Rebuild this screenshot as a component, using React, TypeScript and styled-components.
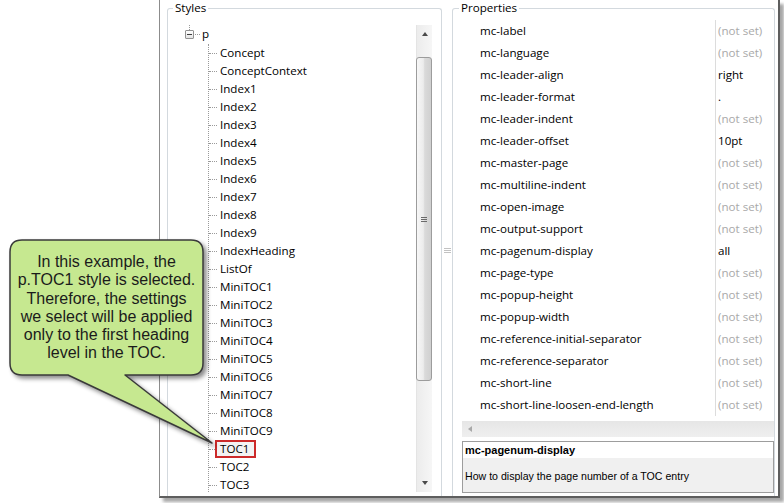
import React from 'react';
import styled, { createGlobalStyle } from 'styled-components';

const GlobalStyle = createGlobalStyle`
  html, body { margin: 0; padding: 0; background: #ffffff; }
  body { width: 784px; height: 503px; overflow: hidden; font-family: "Open Sans", "Noto Sans", sans-serif; }
  * { box-sizing: border-box; }
`;

const UI_FONT = `"Open Sans", "Noto Sans", sans-serif`;

const Stage = styled.div`
  position: relative;
  width: 784px;
  height: 503px;
  display: flex;
  padding-left: 159px;
  overflow: hidden;
`;

const Window = styled.div`
  width: 621px;
  height: 498px;
  border-left: 1px solid #8c8c8c;
  border-right: 2px solid #5e5e5e;
  border-bottom: 2px solid #5e5e5e;
  box-shadow: 4px 4px 3px rgba(0, 0, 0, 0.35);
  background: #ffffff;
  display: flex;
  padding: 0 3px 0 7px;
  overflow: hidden;
`;

const GroupBox = styled.fieldset<{ $width: number; $padLeft: number; $padRight: number }>`
  width: ${(p) => p.$width}px;
  height: 100%;
  margin: 0;
  min-width: 0;
  padding: 0 ${(p) => p.$padRight}px 0 ${(p) => p.$padLeft}px;
  border: 1px solid #d3d9de;
  border-bottom: none;
  border-radius: 3px 3px 0 0;
  display: flex;
  flex-direction: column;
`;

const Legend = styled.legend`
  padding: 0 2px;
  margin-left: -3px;
  font: 11.6px/16px ${UI_FONT};
  color: #000;
`;

const TreePanel = styled.div`
  margin-top: 9px;
  height: 467px;
  display: flex;
`;

const Tree = styled.div`
  flex: 1;
  overflow: hidden;
  font: 11.6px/14px ${UI_FONT};
  color: #000;
`;

const RootRow = styled.div`
  height: 19px;
  padding-left: 9px;
  padding-bottom: 1px;
  display: flex;
  align-items: center;
`;

const ExpandBox = styled.span`
  position: relative;
  width: 9px;
  height: 9px;
  border: 1px solid #929292;
  border-radius: 1px;
  background: linear-gradient(#ffffff, #e4e4e4);
  display: flex;
  align-items: center;
  justify-content: center;
  &::before {
    content: '';
    position: absolute;
    left: 3px;
    top: -7px;
    height: 6px;
    border-left: 1px dotted #9a9a9a;
  }
  &::after {
    content: '';
    width: 5px;
    height: 1px;
    background: #3d3d3d;
  }
`;

const RootConnector = styled.span`
  width: 5px;
  margin-left: 1px;
  border-top: 1px dotted #9a9a9a;
`;

const RootLabel = styled.span`
  margin-left: 2px;
`;

const ChildList = styled.div`
  margin-left: 32px;
  border-left: 1px dotted #9a9a9a;
`;

const ChildRow = styled.div`
  height: 18px;
  display: flex;
  align-items: center;
`;

const Connector = styled.span`
  width: 8px;
  border-top: 1px dotted #9a9a9a;
`;

const NodeLabel = styled.span<{ $selected?: boolean }>`
  margin-left: -2px;
  height: 18px;
  padding: 0 ${(p) => (p.$selected ? 5 : 3)}px 0 3px;
  border: 2px solid ${(p) => (p.$selected ? '#cc2a2a' : 'transparent')};
  background: ${(p) => (p.$selected ? '#f3f3f3' : 'transparent')};
  display: flex;
  align-items: center;
  white-space: nowrap;
`;

const VScroll = styled.div`
  width: 16px;
  display: flex;
  flex-direction: column;
  background: linear-gradient(to right, #ececec, #f6f6f6);
  border-left: 1px solid #e4e4e4;
`;

const ArrowButton = styled.div`
  height: 18px;
  display: flex;
  align-items: center;
  justify-content: center;
`;

const Triangle = styled.span<{ $dir: 'up' | 'down' | 'left'; $color: string }>`
  width: 0;
  height: 0;
  ${(p) =>
    p.$dir === 'up'
      ? `border-left: 3.5px solid transparent; border-right: 3.5px solid transparent; border-bottom: 4px solid ${p.$color};`
      : p.$dir === 'down'
      ? `border-left: 3.5px solid transparent; border-right: 3.5px solid transparent; border-top: 4px solid ${p.$color};`
      : `border-top: 3.5px solid transparent; border-bottom: 3.5px solid transparent; border-right: 4px solid ${p.$color};`}
`;

const Track = styled.div<{ $grow?: boolean; $h?: number }>`
  ${(p) => (p.$grow ? 'flex: 1;' : `height: ${p.$h}px;`)}
`;

const Thumb = styled.div`
  height: 324px;
  margin: 0 0 0 -1px;
  border: 1px solid #9c9c9c;
  border-radius: 3px;
  background: linear-gradient(to right, #f7f7f7 0%, #ececec 45%, #dadada 55%, #d0d0d0 100%);
  display: flex;
  align-items: center;
  justify-content: center;
`;

const Grip = styled.div<{ $w: number; $color: string; $gap: number }>`
  width: ${(p) => p.$w}px;
  display: flex;
  flex-direction: column;
  gap: ${(p) => p.$gap}px;
  span {
    height: 1px;
    background: ${(p) => p.$color};
  }
`;

const Splitter = styled.div`
  width: 10px;
  display: flex;
  flex-direction: column;
  align-items: center;
  padding-top: 248px;
`;

const PropList = styled.div`
  margin-top: 4px;
  height: 401px;
  background: #ffffff;
  font: 11.6px/14px ${UI_FONT};
`;

const PropRow = styled.div`
  height: 22px;
  display: grid;
  grid-template-columns: 253px 1fr;
`;

const PropName = styled.div`
  padding-left: 18px;
  display: flex;
  align-items: center;
  color: #000;
  white-space: nowrap;
`;

const PropValue = styled.div<{ $muted: boolean }>`
  border-left: 1px solid #dcdcdc;
  padding-left: 2px;
  display: flex;
  align-items: center;
  color: ${(p) => (p.$muted ? '#a9a9a9' : '#000')};
  white-space: nowrap;
`;

const HScroll = styled.div`
  height: 16px;
  background: linear-gradient(#e6e6e6, #efefef);
  display: flex;
  align-items: center;
  padding-left: 6px;
`;

const DescBox = styled.div`
  margin-top: 4px;
  height: 52px;
  border: 1px solid #9d9d9d;
  display: flex;
  flex-direction: column;
  font-family: "Liberation Sans", Arial, sans-serif;
  color: #000;
`;

const DescTitle = styled.div`
  height: 16px;
  background: #ffffff;
  padding-left: 2px;
  font-size: 11px;
  font-weight: bold;
  line-height: 16px;
`;

const DescBody = styled.div`
  flex: 1;
  background: #f0f0f0;
  padding: 12px 0 0 2px;
  font-size: 10.6px;
  line-height: 13px;
`;

const CalloutSvg = styled.svg`
  position: absolute;
  left: 0;
  top: 230px;
  width: 240px;
  height: 230px;
  overflow: visible;
  filter: drop-shadow(3px 3px 2px rgba(0, 0, 0, 0.45));
`;

const CalloutText = styled.div`
  position: absolute;
  left: 10px;
  top: 240px;
  width: 193px;
  padding-top: 13px;
  text-align: center;
  font: 16px/18.3px "Liberation Sans", Arial, sans-serif;
  color: #1b1b1b;
`;

const children = [
  'Concept', 'ConceptContext',
  'Index1', 'Index2', 'Index3', 'Index4', 'Index5', 'Index6', 'Index7', 'Index8', 'Index9',
  'IndexHeading', 'ListOf',
  'MiniTOC1', 'MiniTOC2', 'MiniTOC3', 'MiniTOC4', 'MiniTOC5', 'MiniTOC6', 'MiniTOC7', 'MiniTOC8', 'MiniTOC9',
  'TOC1', 'TOC2', 'TOC3',
];

const props: [string, string][] = [
  ['mc-label', '(not set)'],
  ['mc-language', '(not set)'],
  ['mc-leader-align', 'right'],
  ['mc-leader-format', '.'],
  ['mc-leader-indent', '(not set)'],
  ['mc-leader-offset', '10pt'],
  ['mc-master-page', '(not set)'],
  ['mc-multiline-indent', '(not set)'],
  ['mc-open-image', '(not set)'],
  ['mc-output-support', '(not set)'],
  ['mc-pagenum-display', 'all'],
  ['mc-page-type', '(not set)'],
  ['mc-popup-height', '(not set)'],
  ['mc-popup-width', '(not set)'],
  ['mc-reference-initial-separator', '(not set)'],
  ['mc-reference-separator', '(not set)'],
  ['mc-short-line', '(not set)'],
  ['mc-short-line-loosen-end-length', '(not set)'],
];

export default function App() {
  return (
    <>
      <GlobalStyle />
      <Stage>
        <Window>
          <GroupBox $width={275} $padLeft={8} $padRight={9}>
            <Legend>Styles</Legend>
            <TreePanel>
              <Tree>
                <RootRow>
                  <ExpandBox />
                  <RootConnector />
                  <RootLabel>p</RootLabel>
                </RootRow>
                <ChildList>
                  {children.map((c) => (
                    <ChildRow key={c}>
                      <Connector />
                      <NodeLabel $selected={c === 'TOC1'}>{c}</NodeLabel>
                    </ChildRow>
                  ))}
                </ChildList>
              </Tree>
              <VScroll>
                <ArrowButton>
                  <Triangle $dir="up" $color="#4a4a4a" />
                </ArrowButton>
                <Track $h={14} />
                <Thumb>
                  <Grip $w={6} $color="#6a6a6a" $gap={1}>
                    <span />
                    <span />
                    <span />
                  </Grip>
                </Thumb>
                <Track $grow />
                <ArrowButton>
                  <Triangle $dir="down" $color="#4a4a4a" />
                </ArrowButton>
              </VScroll>
            </TreePanel>
          </GroupBox>
          <Splitter>
            <Grip $w={7} $color="#c2c2c2" $gap={1}>
              <span />
              <span />
              <span />
            </Grip>
          </Splitter>
          <GroupBox $width={323} $padLeft={9} $padRight={0}>
            <Legend>Properties</Legend>
            <PropList>
              {props.map(([n, v]) => (
                <PropRow key={n}>
                  <PropName>{n}</PropName>
                  <PropValue $muted={v === '(not set)'}>{v}</PropValue>
                </PropRow>
              ))}
            </PropList>
            <HScroll>
              <Triangle $dir="left" $color="#a8a8a8" />
            </HScroll>
            <DescBox>
              <DescTitle>mc-pagenum-display</DescTitle>
              <DescBody>How to display the page number of a TOC entry</DescBody>
            </DescBox>
          </GroupBox>
        </Window>
        <CalloutSvg viewBox="0 230 240 230">
          <path
            d="M 22 240 H 191 Q 203 240 203 252 V 363 Q 203 375 191 375 H 125 L 212 443 L 68 375 H 22 Q 10 375 10 363 V 252 Q 10 240 22 240 Z"
            fill="#c6e890"
            stroke="#3a3a3a"
            strokeWidth="1.5"
            strokeLinejoin="round"
          />
        </CalloutSvg>
        <CalloutText>
          In this example, the
          <br />
          p.TOC1 style is selected.
          <br />
          Therefore, the settings
          <br />
          we select will be applied
          <br />
          only to the first heading
          <br />
          level in the TOC.
        </CalloutText>
      </Stage>
    </>
  );
}
